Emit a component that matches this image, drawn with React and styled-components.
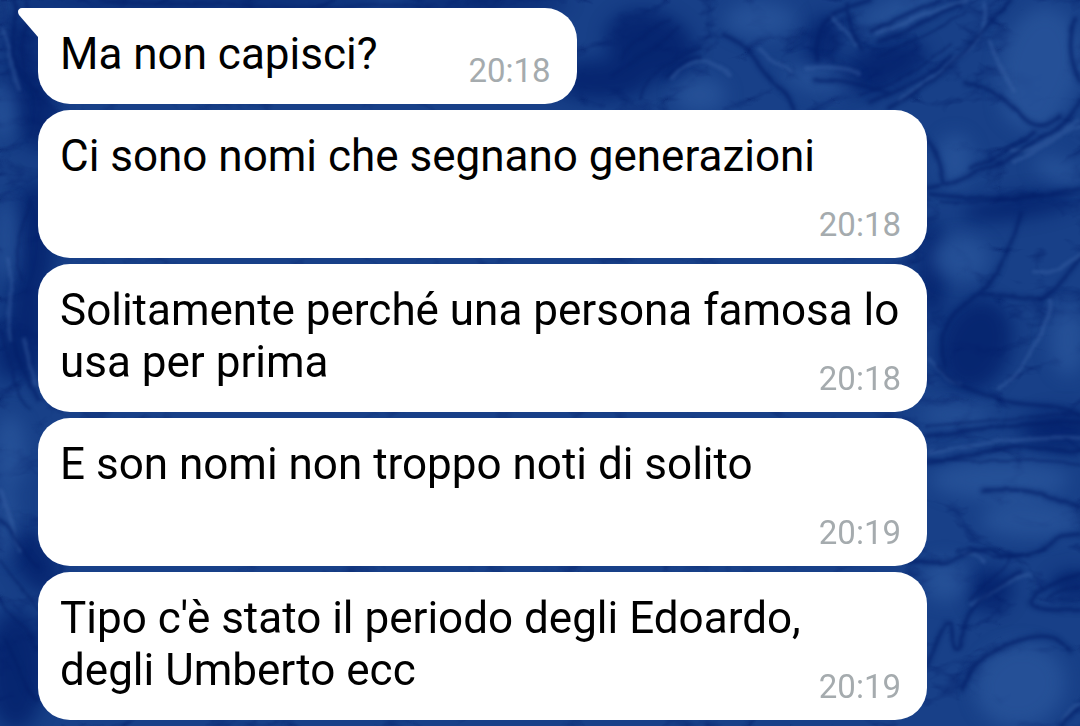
import React from "react";
import styled, { createGlobalStyle } from "styled-components";

const messages = [
  { id: 1, text: "Ma non capisci?", time: "20:18", first: true },
  { id: 2, text: "Ci sono nomi che segnano generazioni", time: "20:18" },
  {
    id: 3,
    text: "Solitamente perché una persona famosa lo usa per prima",
    time: "20:18",
  },
  { id: 4, text: "E son nomi non troppo noti di solito", time: "20:19" },
  {
    id: 5,
    text: "Tipo c'è stato il periodo degli Edoardo, degli Umberto ecc",
    time: "20:19",
  },
];

// soft patches of the marbled wallpaper: cx, cy, rx, ry, rotation
const darkPatches = [
  [650, 45, 46, 34, 20],
  [600, 80, 50, 20, 0],
  [880, 68, 50, 22, -20],
  [822, 42, 16, 28, 10],
  [975, 345, 36, 48, 20],
  [1020, 206, 60, 12, -8],
  [932, 270, 14, 50, 0],
  [1060, 430, 40, 20, 0],
  [1074, 585, 24, 14, 0],
  [990, 590, 22, 22, 0],
  [22, 60, 14, 50, 10],
  [28, 320, 20, 60, 0],
  [10, 350, 16, 30, 0],
  [34, 560, 20, 36, -30],
  [16, 670, 30, 60, 0],
  [34, 240, 20, 60, 0],
  [36, 110, 20, 40, 0],
  [200, 2, 190, 8, 0],
  [480, 3, 90, 8, 0],
];

const lightPatches = [
  [1040, 66, 40, 60, 10],
  [900, 10, 44, 14, -20],
  [700, 95, 26, 18, 0],
  [760, 20, 36, 18, 0],
  [820, 80, 36, 12, 10],
  [1030, 110, 30, 20, 20],
  [955, 160, 18, 26, 0],
  [960, 258, 30, 22, 0],
  [1058, 170, 26, 12, 20],
  [1068, 340, 18, 36, 0],
  [955, 415, 36, 10, 0],
  [1000, 480, 70, 20, 0],
  [1030, 520, 50, 18, 0],
  [1020, 685, 46, 42, -20],
  [945, 580, 22, 22, 0],
  [8, 240, 10, 40, 0],
  [10, 450, 16, 36, 0],
  [6, 520, 10, 40, 0],
  [4, 110, 12, 30, 0],
];

const darkVeins = [
  "M724 34 C748 42 752 58 768 76 C780 88 790 96 794 110",
  "M700 58 C688 56 678 66 668 76",
  "M818 60 C812 40 820 18 846 8 L870 0",
  "M848 4 C848 22 852 36 862 50",
  "M880 42 C910 30 930 18 960 4",
  "M870 32 C896 20 918 10 940 0",
  "M890 108 C926 86 950 70 970 46 C990 22 1000 12 1010 0",
  "M870 102 C910 84 934 76 952 56",
  "M816 80 C850 78 870 90 890 92",
  "M966 84 C990 84 1000 96 1020 114 C1032 128 1044 130 1060 116",
  "M1074 20 C1068 44 1070 64 1080 80",
  "M920 134 C940 146 940 168 944 182",
  "M928 188 C960 184 976 168 1004 162 C1020 154 1026 142 1046 136 C1060 130 1070 118 1080 102",
  "M972 168 C1000 158 1016 144 1034 132",
  "M930 194 C960 198 1010 204 1080 188",
  "M1020 212 C1012 248 1000 278 976 296 C948 312 938 334 944 366",
  "M1080 258 C1066 276 1056 292 1040 298 C1020 302 1000 290 976 296",
  "M936 366 C952 384 970 390 1000 400 C1030 408 1060 402 1080 416",
  "M926 436 C960 432 994 426 1030 424 L1080 422",
  "M926 462 C960 460 990 448 1020 446 C1050 446 1064 456 1080 450",
  "M984 490 C1010 490 1030 488 1050 498 C1064 500 1070 504 1080 508",
  "M908 561 C924 562 936 564 948 562 C962 556 970 550 986 548 C1000 548 990 558 1010 556 C1038 558 1050 544 1062 536 L1080 534",
  "M1020 572 C1000 584 972 600 966 620 C962 640 964 650 956 648 C950 630 956 620 946 624 C936 640 934 656 926 664",
  "M1080 574 C1056 580 1034 590 1030 602 C1032 612 1060 610 1080 610",
  "M962 690 C970 664 994 648 1020 640 C1040 634 1060 634 1070 650",
  "M1080 708 C1070 714 1066 720 1060 726",
  "M14 0 C20 24 8 50 18 72 C24 84 34 84 38 92",
  "M14 330 C12 350 24 370 38 400",
  "M0 520 C16 530 18 550 38 566",
  "M4 640 C18 660 22 690 36 700",
];

// thin echoes that run beside the main veins
const fineVeins = [
  "M940 202 C990 206 1030 194 1080 194",
  "M926 458 C970 464 1020 456 1080 464",
  "M956 552 C970 546 982 548 992 556 C1010 562 1030 554 1046 550",
  "M1080 586 C1066 588 1054 592 1046 600",
  "M860 96 C900 80 930 64 950 44",
  "M880 56 C900 46 930 34 966 12",
  "M620 60 C630 40 650 30 670 20",
  "M612 76 C630 60 660 50 680 26",
  "M640 100 C646 70 680 56 700 48",
  "M926 426 C960 424 1000 418 1080 414",
  "M1010 560 C1000 574 984 584 970 600",
  "M26 0 C34 30 14 44 26 76",
  "M30 200 C24 230 10 240 22 280",
  "M0 330 C14 360 8 390 30 410",
  "M0 600 C12 620 24 620 38 650",
  "M0 560 C14 580 24 590 38 610",
  "M100 0 C150 8 200 0 250 6 S380 2 420 6",
];

const lightVeins = [
  "M672 78 C684 62 704 54 722 68 L730 76",
  "M832 16 C842 26 850 34 856 46",
  "M760 50 C772 64 782 66 790 72",
  "M984 4 C990 26 976 46 956 60 C940 76 920 84 900 100",
  "M990 40 C996 64 1006 80 1014 92",
  "M806 68 C830 66 850 68 860 74",
  "M876 34 C906 24 930 10 966 0",
  "M1012 150 C1030 154 1044 142 1060 134 L1078 120",
  "M1080 126 C1060 134 1040 150 1014 162",
  "M1000 388 C1020 376 1030 354 1042 330 C1048 316 1052 310 1050 300",
  "M928 358 C940 374 950 382 960 384",
  "M1034 272 C1050 276 1062 268 1080 254",
  "M972 604 C990 594 1004 580 1030 574",
  "M964 554 C974 552 980 556 982 562",
  "M930 452 C980 446 1020 434 1080 438",
  "M1062 722 C1068 712 1076 706 1080 704",
  "M8 260 C16 290 4 310 12 340",
  "M0 490 C10 510 12 530 20 550",
  "M4 30 C12 50 10 70 18 90",
  "M24 340 C28 360 34 372 36 384",
];

const Patches = ({ items, ...rest }) => (
  <g filter="url(#patch)" {...rest}>
    {items.map(([cx, cy, rx, ry, turn]) => (
      <ellipse
        key={`${cx}-${cy}`}
        cx={cx}
        cy={cy}
        rx={rx}
        ry={ry}
        transform={`rotate(${turn} ${cx} ${cy})`}
      />
    ))}
  </g>
);

const Veins = ({ items, ...rest }) => (
  <g {...rest}>
    {items.map((d) => (
      <path key={d} d={d} />
    ))}
  </g>
);

const Wallpaper = () => (
  <WallpaperArt
    viewBox="0 0 1080 726"
    preserveAspectRatio="xMidYMid slice"
    aria-hidden="true"
  >
    <defs>
      <filter
        id="patch"
        x="-20%"
        y="-20%"
        width="140%"
        height="140%"
        colorInterpolationFilters="sRGB"
      >
        <feGaussianBlur stdDeviation="9" />
      </filter>
      <filter
        id="vein"
        x="-10%"
        y="-10%"
        width="120%"
        height="120%"
        colorInterpolationFilters="sRGB"
      >
        <feTurbulence
          type="fractalNoise"
          baseFrequency="0.04"
          numOctaves="2"
          seed="3"
          result="noise"
        />
        <feDisplacementMap
          in="SourceGraphic"
          in2="noise"
          scale="5"
          xChannelSelector="R"
          yChannelSelector="G"
        />
        <feGaussianBlur stdDeviation="1.5" />
      </filter>
      <filter
        id="haze"
        x="0"
        y="0"
        width="100%"
        height="100%"
        colorInterpolationFilters="sRGB"
      >
        <feTurbulence
          type="turbulence"
          baseFrequency="0.012 0.02"
          numOctaves="4"
          seed="8"
        />
        <feColorMatrix values="0 0 0 0 0.01  0 0 0 0 0.11  0 0 0 0 0.4  -4 0 0 0 0.9" />
      </filter>
    </defs>
    <rect width="1080" height="726" fill="#184088" />
    <rect width="1080" height="726" filter="url(#haze)" opacity="0.5" />
    <Patches items={darkPatches} fill="#03206b" opacity="0.8" />
    <Patches items={lightPatches} fill="#2a569c" opacity="0.75" />
    <g filter="url(#vein)" fill="none" strokeLinecap="round">
      <Veins
        items={darkVeins}
        stroke="#05246f"
        strokeWidth="9"
        opacity="0.22"
      />
      <Veins
        items={lightVeins}
        stroke="#3f69ab"
        strokeWidth="4"
        opacity="0.35"
      />
      <Veins
        items={fineVeins}
        stroke="#041f68"
        strokeWidth="2"
        opacity="0.6"
      />
      <Veins
        items={darkVeins}
        stroke="#041f68"
        strokeWidth="3"
        opacity="0.6"
      />
    </g>
  </WallpaperArt>
);

const Message = ({ text, time, first }) => (
  <Bubble $first={first}>
    {first && (
      <Tail viewBox="0 0 22 30" aria-hidden="true">
        <path d="M22 0 H4 C0 0 -1 4 1 7 L20 29 H22 Z" fill="#fff" />
      </Tail>
    )}
    {text}
    <Time>{time}</Time>
  </Bubble>
);

const App = () => {
  return (
    <>
      <GlobalStyle />
      <Chat>
        <Wallpaper />
        <MessageList>
          {messages.map((message) => (
            <Message key={message.id} {...message} />
          ))}
        </MessageList>
      </Chat>
    </>
  );
};

const GlobalStyle = createGlobalStyle`
  * {
    box-sizing: border-box;
  }

  body {
    margin: 0;
    background-color: #143a82;
    font-family: Roboto, "Liberation Sans", sans-serif;
  }
`;

const Chat = styled.main`
  position: relative;
  min-height: 100vh;
  overflow: hidden;
`;

const WallpaperArt = styled.svg`
  position: absolute;
  inset: 0;
  width: 100%;
  height: 100%;
`;

const MessageList = styled.ul`
  position: relative;
  display: flex;
  flex-direction: column;
  align-items: flex-start;
  gap: 6px;
  margin: 0;
  padding: 8px 153px 6px 38px;
  list-style: none;
`;

const Bubble = styled.li`
  position: relative;
  display: flow-root;
  max-width: 100%;
  padding: 20px 26px 13px 22px;
  border-radius: ${(props) => (props.$first ? "0 32px 32px 32px" : "32px")};
  background-color: #fff;
  color: #000;
  font-size: 44px;
  line-height: 52px;
`;

const Tail = styled.svg`
  position: absolute;
  top: 0;
  left: -20px;
  width: 22px;
  height: 30px;
`;

/* floats onto the last line when there is room, otherwise below it */
const Time = styled.time`
  float: right;
  margin: 23px 0 0 91px;
  color: #a5abae;
  font-size: 33px;
  line-height: 40px;
`;

export default App;
